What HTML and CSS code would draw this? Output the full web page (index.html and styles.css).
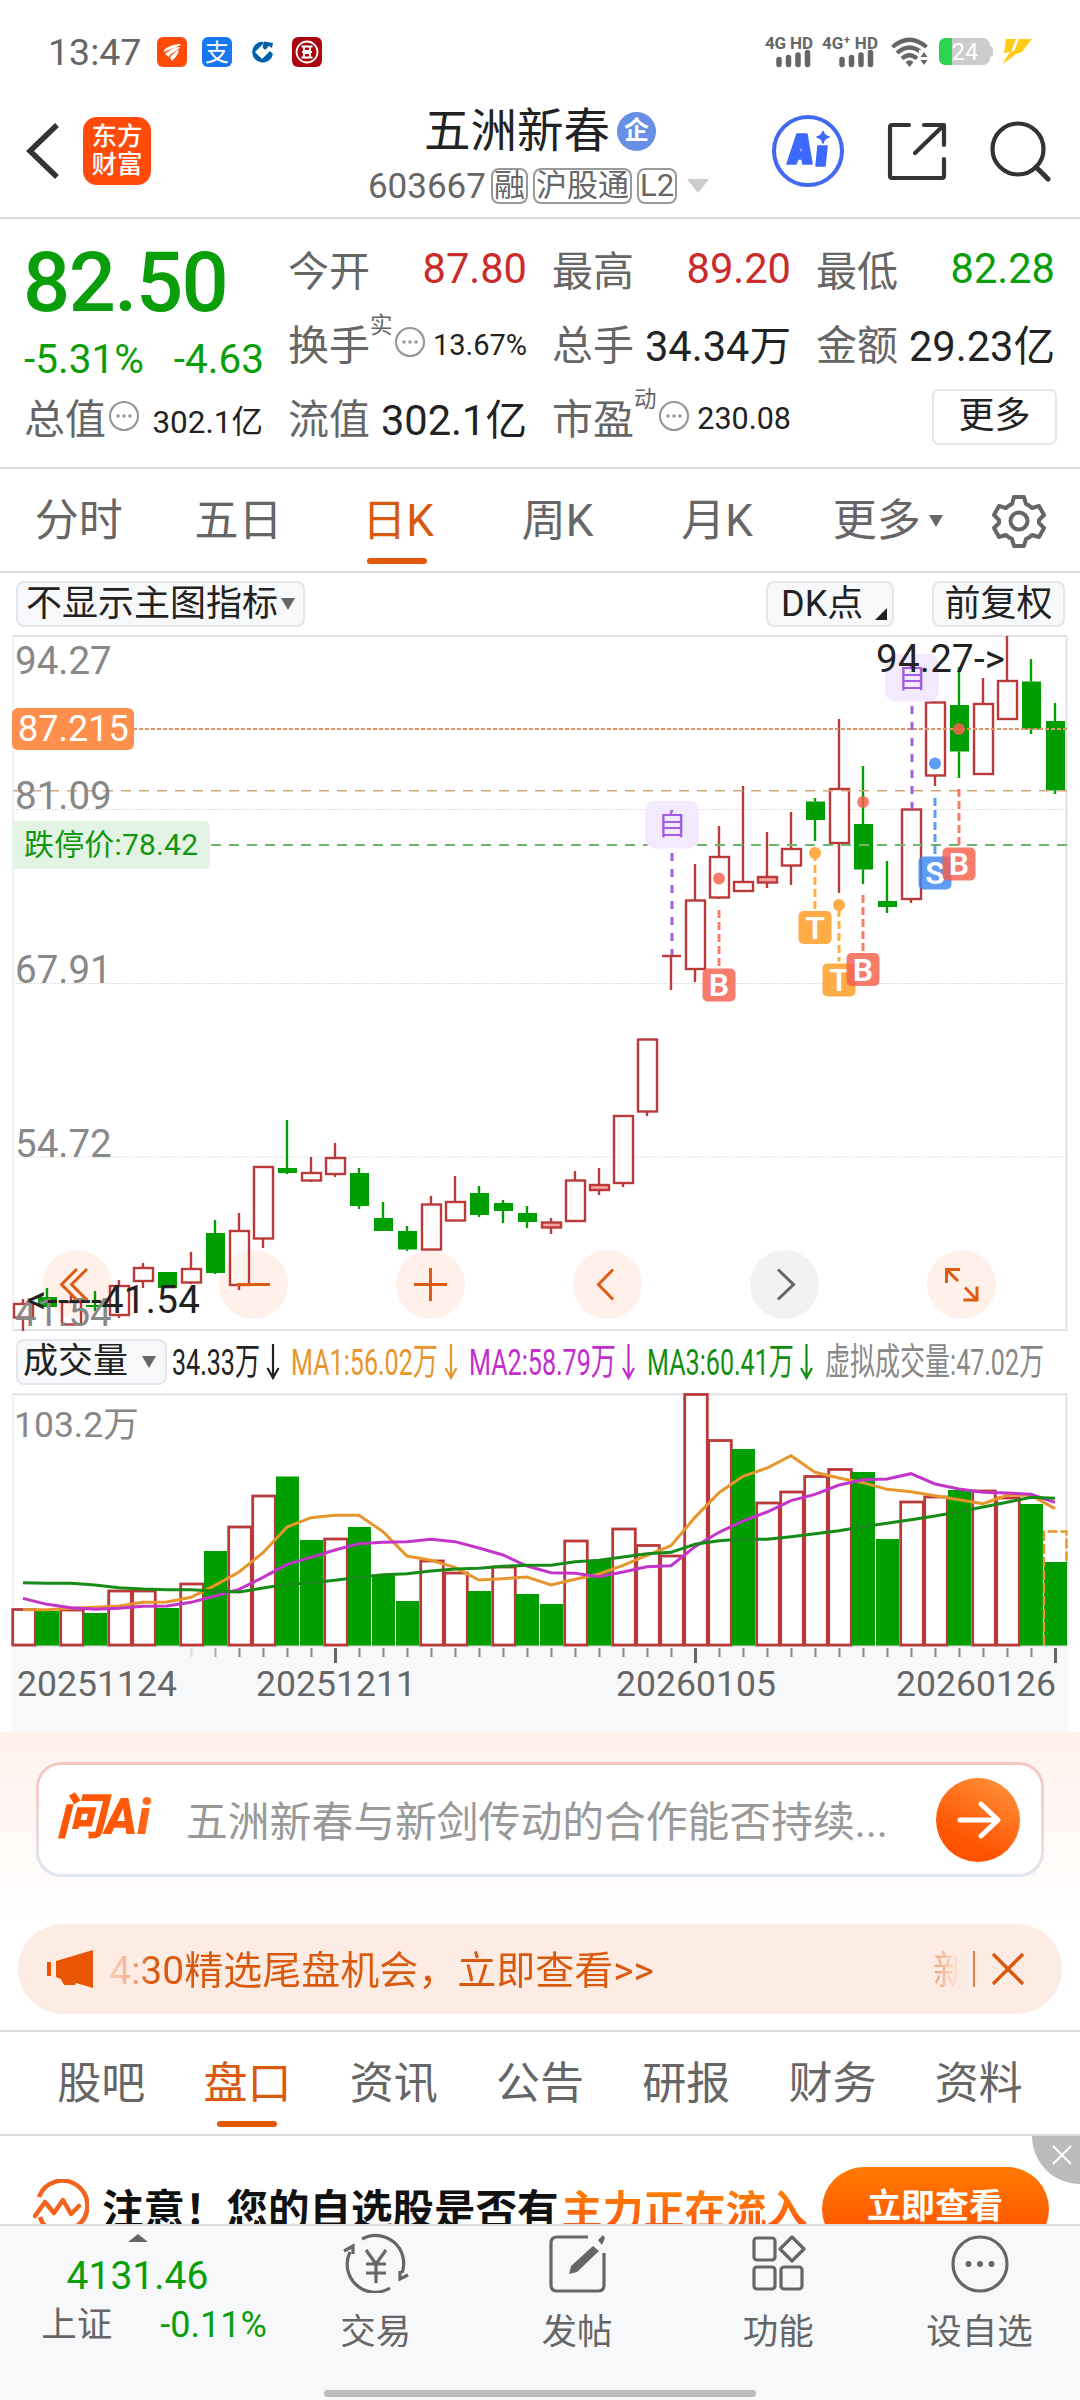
FILE: index.html
```html
<!DOCTYPE html>
<html lang="zh-CN">
<head>
<meta charset="utf-8">
<title>五洲新春 603667</title>
<link rel="stylesheet" href="styles.css">
</head>
<body>
<div class="statusbar">
  <span class="time">13:47</span>
  <svg class="app" viewBox="0 0 30 30"><rect width="30" height="30" rx="6" fill="#ff4a0a"/><path d="M7 13C11 9 18 7 24 7c-2 3-9 4-17 8zM8 17c5-4 9-7 15-7-3 5-9 5-11 10zM13 21c2-4 6-7 9-8-1 5-4 8-7 11z" fill="#fff"/></svg>
  <svg class="app" viewBox="0 0 30 30"><rect width="30" height="30" rx="6" fill="#1677f0"/><text x="15" y="23.500" text-anchor="middle" font-size="24" fill="#fff">支</text></svg>
  <svg class="app" viewBox="0 0 30 30"><path d="M15 4.500A10.500 10.500 0 1 0 26 17l-3-3-8 8-7-7 9-9z" fill="#0060a8"/><path d="M17 4.500l9 1.500-1 5-3-2-5 5-2-2z" fill="#0060a8"/><path d="M15 10l5 5-5 5-5-5z" fill="#fff"/></svg>
  <svg class="app" viewBox="0 0 30 30"><rect width="30" height="30" rx="6" fill="#a9060e"/><circle cx="15" cy="15" r="10.500" fill="none" stroke="#fff" stroke-width="1.800"/><path d="M9.500 9.500h11M9.500 20.500h11M12 10v4h6v-4M12 20v-4h6v4M10 15h10" fill="none" stroke="#fff" stroke-width="1.800"/></svg>
  <div class="signals">
    <svg class="sig" viewBox="0 0 116 36"><g font-size="17" font-weight="700" fill="#666"><text x="1" y="13.500" textLength="48">4G HD</text><text x="58" y="13.500" textLength="56">4G⁺ HD</text></g><path d="M15 24.500v5M24.500 22.500v7M34 20v9.500M43.500 17.500v12M78 24.500v5M87.500 22.500v7M97 20v9.500M106.500 17.500v12" stroke="#666" stroke-width="5.500" stroke-linecap="round"/></svg>
    <svg class="wifi" viewBox="0 0 38 30"><g fill="none" stroke="#666" stroke-width="4.200"><path d="M1.500 10Q18.500-4.500 35.500 10"/><path d="M6 16q12.500-11 25 0"/><path d="M11 21.500q7.500-6.500 15 0"/></g><path d="M14.500 25q4-3.500 8 0l-4 5z" fill="#666"/><path d="M28 13h10v17H28z" fill="#fff"/><path d="M29.500 20l3.500-5 3.500 5zM29.500 23h7L33 28z" fill="#666"/></svg>
    <svg class="batt" viewBox="0 0 54 28"><path d="M50 8q4 0 4 3v5q0 3-4 3z" fill="#ccc"/><rect width="51" height="27" rx="7" fill="#ccc"/><path d="M7 0h6v27H7q-7 0-7-7V7q0-7 7-7" fill="#2bd44c"/><text x="26" y="22" font-size="23.500" text-anchor="middle" fill="#fff">24</text></svg>
    <svg class="bolt" viewBox="0 0 30 25"><path d="M4 0h10L9 13l5-2L0 25 8 13l-6 1zM17 0h13L20 13l-6 2L1 25l8-10 4-5z" fill="#ffcb16"/></svg>
  </div>
</div>

<header class="nav">
  <div class="nav-left">
    <svg class="back" viewBox="0 0 34 58"><path d="M31 3L4 29l27 26" fill="none" stroke="#333" stroke-width="5.500"/></svg>
    <div class="brand"><span>东方</span><span>财富</span></div>
  </div>
  <div class="nav-mid">
    <div class="name">五洲新春<i class="badge">企</i></div>
    <div class="code">603667<span class="tag">融</span><span class="tag">沪股通</span><span class="tag">L2</span><i class="tri"></i></div>
  </div>
  <div class="nav-right">
    <svg class="ai" viewBox="0 0 74 74"><circle cx="37" cy="37" r="34" fill="none" stroke="#4069f0" stroke-width="4"/><path d="M26 20h10l5 30h-9l-1-5h-4l-2 5h-9zM31 29l-3 9h3zM47 32h9l-2 20h-9zM52 17.500q1 4.500 6 5.500-5 1-6 6-1-5-6-6 5-1 6-5.500z" fill="#3c68ff" fill-rule="evenodd" stroke="#3c68ff" stroke-width="1.500" stroke-linejoin="round"/></svg>
    <svg class="share" viewBox="0 0 60 60"><path d="M22 3H5Q3 3 3 5v49q0 2 2 2h50q2 0 2-2V37M37 3h20v20M56 4L28 31" fill="none" stroke="#333" stroke-width="4.200" stroke-linecap="round" stroke-linejoin="round"/></svg>
    <svg class="search" viewBox="0 0 62 62"><circle cx="29" cy="29" r="25.500" fill="none" stroke="#333" stroke-width="4.200"/><path d="M47 47l12 12" stroke="#333" stroke-width="5" stroke-linecap="round"/></svg>
  </div>
</header>

<section class="quote">
  <div class="q-main"><div class="price">82.50</div><div class="chg"><span>-5.31%</span><span>-4.63</span></div></div>
  <div class="q"><label>今开</label><b class="up">87.80</b></div>
  <div class="q"><label>最高</label><b class="up">89.20</b></div>
  <div class="q"><label>最低</label><b class="down">82.28</b></div>
  <div class="q"><label>换手<sup>实</sup></label><svg class="more" viewBox="0 0 32 32"><use href="#dots"/></svg><b class="s29">13.67%</b></div>
  <div class="q"><label>总手</label><b>34.34万</b></div>
  <div class="q"><label>金额</label><b>29.23亿</b></div>
  <div class="q"><label>总值</label><svg class="more" viewBox="0 0 32 32"><use href="#dots"/></svg><b class="s31">302.1亿</b></div>
  <div class="q"><label>流值</label><b>302.1亿</b></div>
  <div class="q"><label>市盈<sup>动</sup></label><svg class="more" viewBox="0 0 32 32"><use href="#dots"/></svg><b class="s30">230.08</b></div>
  <div class="q end"><span class="btn-more">更多</span></div>
</section>
<svg width="0" height="0" class="defs"><defs><g id="dots"><circle cx="16" cy="16" r="14" fill="none" stroke="#999" stroke-width="2.200"/><g fill="#999"><circle cx="10" cy="16" r="1.800"/><circle cx="16" cy="16" r="1.800"/><circle cx="22" cy="16" r="1.800"/></g></g></defs></svg>

<nav class="tabs">
  <span>分时</span><span>五日</span><span class="on">日K</span><span>周K</span><span>月K</span><span>更多<i class="tri dark"></i></span>
  <svg class="gear" viewBox="0 0 54 54"><path d="M22 3h10l2 7q3 1 6 4l7-2 5 9-5 5v3l5 5-5 9-7-2q-3 3-6 4l-2 7H22l-2-7q-3-1-6-4l-7 2-5-9 5-5v-3l-5-5 5-9 7 2q3-3 6-4z" fill="none" stroke="#666" stroke-width="4" stroke-linejoin="round"/><circle cx="27" cy="27" r="8.500" fill="none" stroke="#666" stroke-width="4"/></svg>
</nav>

<div class="tools">
  <span class="chip main">不显示主图指标<i class="tri dark"></i></span>
  <span class="chip dk">DK点<i class="corner"></i></span>
  <span class="chip fq">前复权</span>
</div>

<svg class="kline" id="kline" viewBox="0 635 1080 697"></svg>

<div class="volhead">
  <span class="chip vol">成交量<i class="tri dark"></i></span>
  <svg class="ma" viewBox="172 1333 900 60">
    <g font-size="37">
      <g fill="#222" stroke="#222"><text x="172" y="1375.500" textLength="88" lengthAdjust="spacingAndGlyphs">34.33万</text><path class="arr" d="M273 1345v34M267.500 1369l5.500 10 5.500-10"/></g>
      <g fill="#e6962c" stroke="#e6962c"><text x="291" y="1375.500" textLength="147" lengthAdjust="spacingAndGlyphs">MA1:56.02万</text><path class="arr" d="M451 1345v34M445.500 1369l5.500 10 5.500-10"/></g>
      <g fill="#c22ecb" stroke="#c22ecb"><text x="469" y="1375.500" textLength="147" lengthAdjust="spacingAndGlyphs">MA2:58.79万</text><path class="arr" d="M628.500 1345v34M623 1369l5.500 10 5.500-10"/></g>
      <g fill="#128f12" stroke="#128f12"><text x="647" y="1375.500" textLength="147" lengthAdjust="spacingAndGlyphs">MA3:60.41万</text><path class="arr" d="M806.500 1345v34M801 1369l5.500 10 5.500-10"/></g>
      <text x="825" y="1375.500" textLength="219" lengthAdjust="spacingAndGlyphs" fill="#888">虚拟成交量:47.02万</text>
    </g>
  </svg>
</div>

<svg class="volume" id="volume" viewBox="0 1393 1080 339"></svg>

<section class="ask">
  <div class="askbox">
    <span class="asklogo">问Ai</span>
    <span class="question">五洲新春与新剑传动的合作能否持续...</span>
    <svg class="go" viewBox="0 0 84 84"><defs><linearGradient id="og" x1=".8" y1=".1" x2=".4" y2=".8"><stop stop-color="#ff8a35"/><stop offset="1" stop-color="#ff5300"/></linearGradient></defs><circle cx="42" cy="42" r="42" fill="url(#og)"/><path d="M24 42h37M45 26l17 16-17 16" fill="none" stroke="#fff" stroke-width="5" stroke-linecap="round" stroke-linejoin="round"/></svg>
  </div>
</section>

<div class="notice">
  <svg class="horn" viewBox="0 0 48 40"><path d="M2 13v14" stroke="#ea5504" stroke-width="4"/><path d="M9 12L46 1v38L29 34l-1 2H17l-3-6-5-2z" fill="#ea5504"/></svg>
  <span class="ntext">4:30精选尾盘机会，立即查看&gt;&gt;</span>
  <span class="next">新</span>
  <i class="sep"></i>
  <svg class="x" viewBox="0 0 34 34"><path d="M2 2l30 30M32 2L2 32" stroke="#d9590f" stroke-width="3.400"/></svg>
</div>

<nav class="tabs2"><span>股吧</span><span class="on">盘口</span><span>资讯</span><span>公告</span><span>研报</span><span>财务</span><span>资料</span></nav>

<div class="ad">
  <svg class="adicon" viewBox="0 0 56 56"><path d="M6 18A25 25 0 1 1 44 47M18 50Q10 48 7 38" fill="none" stroke="#f4631e" stroke-width="4.500"/><path d="M2 37l10-14 9 11 9-13 8 14 8-8" fill="none" stroke="#f4631e" stroke-width="4.500" stroke-linejoin="round" stroke-linecap="round"/></svg>
  <span class="adtext">注意！您的自选股是否有</span><span class="adhot">主力正在流入</span>
  <span class="adbtn">立即查看</span>
  <span class="adclose"><svg viewBox="0 0 20 20"><path d="M1 1l18 18M19 1L1 19" stroke="#fff" stroke-width="2"/></svg></span>
</div>

<footer class="bottom">
  <div class="index"><i class="caret"></i><div class="idx">4131.46</div><div class="idx2"><span>上证</span><em>-0.11%</em></div></div>
  <div class="item"><svg viewBox="0 0 66 60"><path d="M19 6A28 28 0 0 1 59 40M47 55A28 28 0 0 1 7 19M1 18l9-5v8M65 42l-8 4v-8M23 17l10 14 10-14M33 31v19M23 31h20M23 40h20" fill="none" stroke="#666" stroke-width="3.200"/></svg><span>交易</span></div>
  <div class="item"><svg viewBox="0 0 66 60"><path d="M44 4H13Q7 4 7 10v42q0 6 6 6h41q6 0 6-6V20" fill="none" stroke="#666" stroke-width="3.200"/><path d="M54 7l5-5 2 3-3 7zM49 13l6 5-22 21-8 2 2-8z" fill="#666"/></svg><span>发帖</span></div>
  <div class="item"><svg viewBox="0 0 66 60"><g fill="none" stroke="#666" stroke-width="3.200" stroke-linejoin="round"><rect x="9" y="5" width="21" height="22" rx="3"/><rect x="9" y="34" width="21" height="22" rx="3"/><rect x="36" y="34" width="21" height="22" rx="3"/><path d="M47 4l12 12-12 12-12-12z"/></g></svg><span>功能</span></div>
  <div class="item"><svg viewBox="0 0 66 60"><circle cx="33" cy="31" r="27" fill="none" stroke="#666" stroke-width="3.200"/><g fill="#666"><circle cx="21.500" cy="31" r="3"/><circle cx="33" cy="31" r="3"/><circle cx="44.500" cy="31" r="3"/></g></svg><span>设自选</span></div>
  <i class="home"></i>
</footer>
<script src="chart.js"></script>
</body>
</html>
```
FILE: styles.css
```css
* { box-sizing: border-box; }
html, body { margin: 0; padding: 0; }
body { width: 1080px; height: 2400px; overflow: hidden; background: #fff; color: #222; font-family: Roboto, "Noto Sans CJK SC", sans-serif; display: flex; flex-direction: column; }
body > * { flex: none; }
i, em { font-style: normal; }
svg { display: block; flex: none; }
svg text { font-family: Roboto, "Noto Sans CJK SC", sans-serif; }
.defs { position: absolute; }
.tri { display: inline-block; border: 11px solid transparent; border-top: 14px solid #ccc; border-bottom: 0; }
.tri.dark { border-width: 12px 7px 0; border-top-color: #666; }

.statusbar { height: 103px; display: flex; align-items: center; padding: 0 48px 0 48px; }
.time { font-size: 37.500px; color: #666; width: 109px; }
.app { width: 30px; height: 30px; margin-right: 15px; }
.signals { margin-left: auto; display: flex; align-items: center; }
.sig { width: 116px; height: 36px; margin-top: 3px; overflow: visible; }
.wifi { width: 38px; height: 30px; margin: 0 0 0 11px; }
.batt { width: 54px; height: 28px; margin-left: 10px; }
.bolt { width: 30px; height: 25px; margin-left: 9px; }

.nav { height: 116px; border-bottom: 2px solid #d9d9d9; display: grid; grid-template-columns: 1fr auto 1fr; }
.nav-left { display: flex; padding-left: 26px; align-items: flex-start; }
.back { width: 34px; height: 58px; margin-top: 19px; }
.brand { width: 68px; height: 68px; margin: 14px 0 0 23px; border-radius: 14px; background: #ff4a0a; color: #fff; font-weight: 500; font-size: 25.500px; line-height: 28px; padding-top: 5px; display: flex; flex-direction: column; align-items: center; }
.nav-mid { display: flex; flex-direction: column; align-items: center; padding-right: 3px; }
.name { display: flex; align-items: center; font-size: 46.500px; line-height: 56px; height: 56px; color: #222; margin-left: 3px; }
.badge { width: 39px; height: 39px; border-radius: 50%; background: #678fe6; color: #fff; font-size: 25px; line-height: 37px; text-align: center; font-weight: 700; margin-left: 7px; }
.code { display: flex; align-items: center; font-size: 35px; color: #666; height: 36px; margin-top: 9px; }
.tag { height: 36px; line-height: 32px; border: 2px solid #999; border-radius: 8px; padding: 0 1px; font-size: 31px; margin-left: 5px; }
.code .tri { margin-left: 10px; }
.nav-right { display: flex; justify-content: flex-end; padding-right: 29px; }
.ai { width: 74px; height: 74px; margin-top: 11px; }
.share { width: 60px; height: 60px; margin: 19px 0 0 42px; }
.search { width: 62px; height: 62px; margin: 17px 0 0 42px; }

.quote { height: 250px; border-bottom: 2px solid #d9d9d9; display: grid; grid-template-columns: repeat(4, 238px); column-gap: 26px; grid-template-rows: 75px 74px 74px; padding: 13px 25px 0; }
.q-main { grid-row: span 2; color: #0a9e0a; }
.price { font-size: 83px; font-weight: 500; line-height: 98px; height: 98px; padding-top: 2px; letter-spacing: -1.500px; margin-left: -2px; }
.chg { display: flex; justify-content: space-between; font-size: 40.500px; line-height: 50px; margin: 4px -1px 0 -1px; }
.q { display: flex; align-items: center; font-size: 41px; white-space: nowrap; padding-bottom: 2px; }
.q label { color: #666; position: relative; margin-left: -1px; top: -1px; }
.q sup { position: absolute; left: 100%; top: -1px; font-size: 22.500px; line-height: 28px; }
.q label:has(sup) + .more { margin-left: 24px; }
.q b { font-weight: 400; font-size: 41.600px; color: #222; margin-left: auto; }
.q b.up { color: #cc2b2b; }
.q b.down { color: #0a9e0a; }
.q b.s29 { font-size: 29px; } .q b.s30 { font-size: 30.500px; } .q b.s31 { font-size: 31.500px; }
.q b.s29, .q b.s30, .q b.s31 { padding-top: 3px; }
.more { width: 32px; height: 32px; margin: -3px 0 0 2px; }
.q.end { justify-content: flex-end; }
.btn-more { width: 125px; height: 56px; border: 2px solid #e6e6e6; border-radius: 7px; font-size: 36px; line-height: 51px; text-align: center; margin-right: -2px; }

.tabs { height: 104px; border-bottom: 2px solid #d9d9d9; display: grid; grid-template-columns: repeat(6, 159.600px) 1fr; align-items: center; font-size: 44px; color: #666; }
.tabs span { text-align: center; position: relative; left: -1px; line-height: 105px; height: 103px; }
.tabs .on, .tabs2 .on { color: #d9590f; }
.tabs .on::after, .tabs2 .on::after { content: ""; position: absolute; left: 50%; bottom: 8px; width: 60px; height: 6px; margin-left: -31px; border-radius: 3px; background: #e2590c; }
.tabs .tri { position: absolute; left: 132px; top: 46px; }
.gear { width: 54px; height: 54px; margin-left: 34px; }

.tools { height: 62px; display: flex; align-items: flex-start; padding: 8px 15px 0 16px; }
.chip { height: 46px; border: 2px solid #e3e6ec; border-radius: 8px; background: #f7f8fa; font-size: 36px; line-height: 40px; color: #222; display: flex; align-items: center; white-space: nowrap; position: relative; }
.chip.main { width: 289px; padding-left: 8px; gap: 3px; }
.chip.dk { width: 128px; margin-left: auto; padding-left: 13px; }
.chip.fq { width: 133px; margin-left: 38px; justify-content: center; }
.corner { position: absolute; right: 5px; bottom: 5px; border-left: 12px solid transparent; border-bottom: 12px solid #222; }
.kline { width: 1080px; height: 697px; }
.volhead { height: 61px; display: flex; padding-left: 16px; }
.chip.vol { width: 151px; margin-top: 7px; padding-left: 5px; font-size: 35px; gap: 14px; }
.ma { width: 900px; height: 60px; margin-left: 5px; }
.ma text { stroke: none; }
.arr { fill: none; stroke-width: 2.200; }
.volume { width: 1080px; height: 339px; }

.ask { height: 192px; background: linear-gradient(#fff1ec, #fff); padding: 30px 36px 0; }
.askbox { height: 115px; border: 3px solid transparent; border-radius: 25px; background: linear-gradient(#fff, #fff) padding-box, linear-gradient(#f6c6bd, #dfe6f1) border-box; display: flex; align-items: center; padding: 0 21px 0 17px; }
.asklogo { width: 130px; font-size: 49px; line-height: 60px; margin-top: -4px; font-weight: 900; font-style: italic; background: linear-gradient(90deg, #ff5500, #ff5a0a 60%, #ff9457); background-clip: text; -webkit-background-clip: text; color: transparent; white-space: nowrap; }
.question { font-size: 41.800px; color: #999; white-space: nowrap; flex: 1; margin-top: -2px; }
.go { width: 84px; height: 84px; }

.notice { height: 90px; margin: 0 18px; background: #fdece3; border-radius: 45px; display: flex; align-items: center; padding: 0 37px 0 29px; color: #d9590f; font-size: 39px; white-space: nowrap; }
.horn { width: 48px; height: 40px; }
.ntext { margin: -5px 0 0 14px; background: linear-gradient(90deg, #f6cdb6, #f3b28f 22px, #d9590f 42px); background-clip: text; -webkit-background-clip: text; color: transparent; }
.next { margin: -5px 0 0 auto; width: 24px; overflow: hidden; background: linear-gradient(90deg, #efa27a, #fbe0d1 24px); background-clip: text; -webkit-background-clip: text; color: transparent; }
.sep { width: 2px; height: 36px; background: #d9804d; margin: 0 16px; }
.x { width: 34px; height: 34px; }

.tabs2 { height: 106px; margin-top: 16px; border-top: 2px solid #d9d9d9; border-bottom: 2px solid #d9d9d9; padding: 0 28px; display: grid; grid-template-columns: repeat(7, 1fr); font-size: 44px; color: #666; }
.tabs2 span { text-align: center; line-height: 105px; height: 102px; position: relative; }
.tabs2 .on::after { bottom: 7px; margin-left: -30px; }

.ad { height: 88px; overflow: hidden; position: relative; display: flex; padding-left: 33px; background: #fff; }
.adicon { width: 56px; height: 56px; margin-top: 43px; }
.adtext, .adhot { font-size: 41.500px; font-weight: 700; color: #111; line-height: 60px; margin-top: 45px; white-space: nowrap; }
.adtext { margin-left: 13px; }
.adhot { font-size: 41px; margin-left: 3px; background: linear-gradient(#ff8a00, #ff5a10); background-clip: text; -webkit-background-clip: text; color: transparent; }
.adbtn { width: 227px; height: 84px; margin: 31px 0 0 14px; border-radius: 42px; background: linear-gradient(#ff7a00, #ff4d00); color: #fff; font-weight: 700; font-size: 34px; line-height: 79px; text-align: center; flex: none; }
.adclose { position: absolute; right: 0; top: 0; width: 48px; height: 48px; border-bottom-left-radius: 48px; background: #bcbcbc; }
.adclose svg { width: 20px; height: 20px; margin: 9px 0 0 20px; }

.bottom { height: 176px; background: #f7f8fa; border-top: 2px solid #dcdcdc; position: relative; display: grid; grid-template-columns: 275px repeat(4, 201.300px); }
.index { color: #0a9e0a; display: flex; flex-direction: column; align-items: center; }
.caret { border: 10px solid transparent; border-bottom: 8px solid #666; border-top: 0; margin-top: 8px; }
.idx { font-size: 39px; line-height: 46px; margin-top: 11px; }
.idx2 { display: flex; gap: 48px; margin: 3px 0 0 33px; font-size: 36px; line-height: 46px; }
.idx2 span { color: #666; font-size: 35.500px; }
.item { display: flex; flex-direction: column; align-items: center; font-size: 35.500px; color: #666; line-height: 46px; white-space: nowrap; }
.item svg { width: 66px; height: 60px; margin: 7px 0 16px; }
.home { position: absolute; left: 324px; bottom: 3px; width: 432px; height: 7px; border-radius: 4px; background: #bdbdbd; }
```
FILE: chart.js
```js
const NS = 'http://www.w3.org/2000/svg';
const RED = '#b93a38', GREEN = '#009e00';
const X0 = 23, STEP = 24;
const cx = i => X0 + STEP * i;

function add(parent, tag, attrs, text) {
  const el = document.createElementNS(NS, tag);
  for (const k in attrs) el.setAttribute(k, attrs[k]);
  if (text !== undefined) el.textContent = text;
  parent.appendChild(el);
  return el;
}
function line(p, x1, y1, x2, y2, stroke, width, dash) {
  const a = { x1, y1, x2, y2, stroke, 'stroke-width': width };
  if (dash) a['stroke-dasharray'] = dash;
  return add(p, 'line', a);
}

// rising flag, wick top, body top, body bottom, wick bottom
const candles = [
  [1,1299,1304,1317.5,1331],[0,1288,1297,1307,1307],[1,1293,1302,1324.5,1324.5],[0,1291,1305,1307,1311],
  [1,1280,1286,1315,1318],[1,1263,1268,1281,1288],[0,1272,1272,1288,1288],[1,1252,1269,1282.5,1284],
  [0,1220,1233,1273,1274],[1,1213,1231,1285,1290],[1,1167,1167,1238.5,1248],[0,1120,1168,1173,1174],
  [1,1157,1173,1180.5,1182],[1,1143,1158,1174,1177],[0,1168,1173,1206,1209],[0,1202,1218,1231,1231],
  [0,1226,1231,1249.5,1251],[1,1196,1204.5,1249.5,1249.5],[1,1176,1202,1220.5,1221],[0,1186,1193,1215,1217],
  [0,1200,1203,1211,1223],[0,1206,1213,1222,1228],[1,1218,1222.5,1227.5,1234],[1,1171,1180.5,1221,1221],
  [1,1168,1185,1190,1195],[1,1116,1116,1183,1187],[1,1039.5,1039.5,1111.5,1116],[1,956,956,956,990],
  [1,864,900.5,969,982],[1,826,857,897.5,899],[1,786,882,891,891],[1,832,877,882.5,888],
  [1,812,849,865.5,885],[0,798,801.5,820,841],[1,719,789,843,893],[0,766,824,869.5,884],
  [0,861,901,907,913],[1,809,809.5,899,903],[1,702,702.5,775.5,786],[0,667,705,751.5,778],
  [1,678,704,774,774],[1,636,681,719,719],[0,659,681.5,729.5,734],[0,703,721,790.5,794]
];

const k = document.getElementById('kline');
[809.5, 983.5, 1157].forEach(y => line(k, 13, y, 1067, y, '#d4d4d4', 1, '1.5 1.5'));
add(k, 'path', { d: 'M13 636H1066.500V1330H13', fill: 'none', stroke: '#e2e2e4', 'stroke-width': 2 });
line(k, 13, 636, 13, 1330, '#e2e2e4', 1);

// round control buttons
[77, 253.5, 430.5, 607.5, 784.5, 961.5].forEach((x, i) =>
  add(k, 'circle', { cx: x, cy: 1284.5, r: 34.5, fill: i === 4 ? '#f2f2f2' : '#fff1e9' }));

candles.forEach(([up, wt, t, b, wb], i) => {
  const x = cx(i), c = up ? RED : GREEN;
  if (wt < t) line(k, x, wt, x, t, c, 2.4);
  if (wb > b) line(k, x, b, x, wb, c, 2.4);
  if (t === b) line(k, x - 9, t, x + 10, t, c, 2.4);
  else if (up) add(k, 'rect', { x: x - 9, y: t, width: 19, height: b - t, fill: b - t < 6 ? '#f9a3a0' : '#fff', 'fill-opacity': i < 10 ? 0.3 : 1, stroke: c, 'stroke-width': 2.4 });
  else add(k, 'rect', { x: x - 9, y: t, width: 19, height: b - t, fill: c });
});
line(k, 13, 729, 1067, 729, '#dd9366', 1.8, '4 2');
line(k, 13, 790.7, 1067, 790.7, '#cfa778', 1.4, '10 8');
line(k, 13, 845, 1067, 845, '#6cb56c', 1.8, '10 8');

const label = (x, y, s, size, fill, extra) => add(k, 'text', Object.assign({ x, y, 'font-size': size, fill }, extra), s);
label(15, 674, '94.27', 38.5, '#888');
label(15, 809, '81.09', 38.5, '#888');
label(15, 983, '67.91', 38.5, '#888');
label(15, 1156.5, '54.72', 38.5, '#888');
label(15, 1326, '41.54', 38.5, '#888');
add(k, 'rect', { x: 12, y: 708, width: 122, height: 42, rx: 6, fill: '#ff8f4c' });
label(18, 741, '87.215', 36, '#fff');
add(k, 'path', { d: 'M12 821H204q6 0 6 6V863q0 6-6 6H12z', fill: '#e3f4e4' });
label(24, 855, '跌停价:78.42', 30, '#129512', { textLength: 174 });

// trade markers
[[719, 968.5, 910, 878.5, 'B'], [815, 911, 853, 853, 'T'], [839, 963.5, 909, 905, 'T'], [863, 953, 895, 802, 'B'], [935, 856.5, 798, 763.5, 'S'], [959, 847.5, 789, 729, 'B']].forEach(([x, y, ly, dy, s]) => {
  const c = { B: '#f6604c', T: '#ff9a1f', S: '#3d88f2' }[s];
  const g = add(k, 'g', { opacity: 0.82 });
  line(g, x, ly, x, y - 2, c, 3, '8 4');
  add(g, 'circle', { cx: x, cy: dy, r: 6, fill: c });
  add(g, 'rect', { x: x - 16.5, y, width: 33, height: 33, rx: 5, fill: c });
  add(k, 'text', { x, y: y + 27.5, 'font-size': 32, 'font-weight': 600, 'text-anchor': 'middle', fill: '#fff' }, s);
});
[[672, 801, 955], [912, 654, 809]].forEach(([x, y, end]) => {
  add(k, 'rect', { x: x - 27, y, width: 54, height: 47.5, rx: 10, fill: '#f4eafe' });
  add(k, 'text', { x, y: y + 34, 'font-size': 29, 'text-anchor': 'middle', fill: '#a45be6' }, '自');
  line(k, x, y + 52, x, end, '#a45be6', 3, '8 8');
});
label(876, 672, '94.27->', 38.5, '#222', { textLength: 129 });
label(27, 1313, '<-----41.54', 38.5, '#222', { textLength: 173 });

const icon = (d, c) => add(k, 'path', { d, fill: 'none', stroke: c, 'stroke-width': 3 });
icon('M77 1269L61.500 1284.500L77 1300M87 1269L71.500 1284.500L87 1300', '#dd5c14');
icon('M237 1284.500H270', '#dd5c14');
icon('M414 1284.500H447M430.500 1268V1301', '#dd5c14');
icon('M613 1269.500L598.500 1284.500L613 1299.500', '#dd5c14');
icon('M778 1269.500L793.500 1284.500L778 1299.500', '#666');
icon('M946.500 1283V1269.500H960M947 1270L958 1281M977 1286.500V1300H963.500M976.500 1299.500L965 1287.500', '#dd5c14');

// volume panel: y of each bar's top
const v = document.getElementById('volume');
const BASE = 1645;
const tops = [1609.5,1611,1610,1613,1591,1591,1608,1584,1551,1527,1496,1476.5,1540,1539,1527,1575,1601,1561,1573,1591,1567,1594,1604,1541,1560,1529,1545.5,1556,1394.5,1440.5,1449,1503,1492,1476.5,1469.5,1472,1539,1502,1497,1490,1491,1498,1504,1562];
const rising = [0,2,4,5,7,9,10,13,17,18,20,23,25,26,27,28,29,31,32,33,34,37,38,40,41];
add(v, 'rect', { x: 12, y: 1646, width: 1056, height: 86, fill: '#f7f8fa' });
add(v, 'path', { d: 'M13 1394.300H1066.500V1646H13', fill: 'none', stroke: '#e2e2e4', 'stroke-width': 2 });
line(v, 13, 1394, 13, 1646, '#e2e2e4', 1);
tops.forEach((t, i) => {
  const x = cx(i);
  if (rising.includes(i)) add(v, 'rect', { x: x - 10.3, y: t, width: 22.6, height: BASE - t, fill: '#fff', stroke: RED, 'stroke-width': 2.8 });
  else add(v, 'rect', { x: x - 11, y: t, width: 23, height: BASE - t + 0.5, fill: GREEN });
});
add(v, 'path', { d: 'M1044 1645V1531.500H1066.500V1562', fill: 'none', stroke: '#e6962c', 'stroke-width': 2.4, 'stroke-dasharray': '10 3' });

const series = {
  '#168c16': [608,610,610,615,623,627,629,629,633,636,624,613,608,601,592,584,581,573,567,565,559,556,556,545,541,531,521,517,493,482,477,478,470,461,452,440,430,419,408,395,381,367,352,355],
  '#e6962c': [689,689,685,682,678,667,666,652,616,576,518,441,413,406,406,455,528,541,562,600,596,591,615,598,582,556,526,497,412,338,289,264,227,277,294,308,328,335,347,359,371,346,346,386],
  '#c235c8': [655,673,683,688,685,679,678,667,648,628,592,553,532,510,491,487,485,478,485,504,525,558,578,580,590,576,560,557,500,457,423,396,362,343,315,299,297,281,312,327,337,339,343,367]
};
for (const c of ['#e6962c', '#c235c8', '#168c16'])
  add(v, 'polyline', { points: series[c].map((n, i) => cx(i) + ',' + (1380 + n / 3)).join(' '), fill: 'none', stroke: c, 'stroke-width': 3 });

for (let i = 7; i < 44; i++) {
  const major = i === 13 || i === 28 || i === 43;
  line(v, cx(i) + 0.5, 1648, cx(i) + 0.5, major ? 1663 : 1657, i === 7 ? '#ddd' : i === 8 ? '#aaa' : major ? '#666' : '#888', major ? 3 : 2);
}
const vt = (x, y, s, fill, extra) => add(v, 'text', Object.assign({ x, y, 'font-size': 35.5, fill }, extra), s);
vt(14, 1436.5, '103.2万', '#888');
[[17, '20251124'], [256, '20251211'], [616, '20260105'], [896, '20260126']].forEach(([x, s]) => vt(x, 1696, s, '#666', { textLength: 160 }));
```
